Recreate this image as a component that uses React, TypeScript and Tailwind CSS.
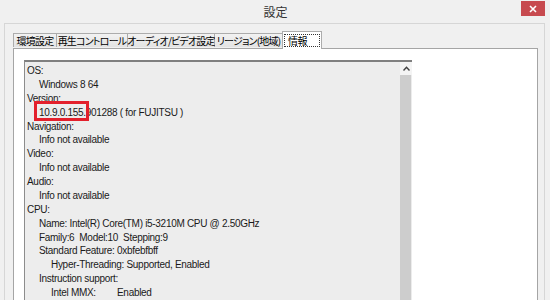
import React from "react";

const lines: [number, string][] = [
  [0, "OS:"],
  [1, "Windows 8 64"],
  [0, "Version:"],
  [1, "__VERSION__"],
  [0, "Navigation:"],
  [1, "Info not available"],
  [0, "Video:"],
  [1, "Info not available"],
  [0, "Audio:"],
  [1, "Info not available"],
  [0, "CPU:"],
  [1, "Name: Intel(R) Core(TM) i5-3210M CPU @ 2.50GHz"],
  [1, "Family:6  Model:10  Stepping:9"],
  [1, "Standard Feature: 0xbfebfbff"],
  [2, "Hyper-Threading: Supported, Enabled"],
  [1, "Instruction support:"],
  [2, "__MMX__"],
];

const tabs = [
  { label: "環境設定", w: "w-[44px]" },
  { label: "再生コントロール", w: "w-[71px]" },
  { label: "オーディオ/ビデオ設定", w: "w-[87px]" },
  { label: "リージョン(地域)", w: "w-[68px]" },
];

function Line({ level, text }: { level: number; text: string }) {
  const pad = level === 0 ? "pl-0" : level === 1 ? "pl-[12px]" : "pl-[24px]";
  if (text === "__VERSION__") {
    return (
      <div className={`relative whitespace-pre ${pad}`}>
        10.9.0.155.901288 ( for FUJITSU )
        <div className="absolute left-[7px] top-[-5px] w-[55px] h-[20px] border-[3px] border-[#e3202c]" />
      </div>
    );
  }
  if (text === "__MMX__") {
    return (
      <div className={`flex whitespace-pre ${pad}`}>
        <span className="w-[66px]">Intel MMX:</span>
        <span>Enabled</span>
      </div>
    );
  }
  return <div className={`whitespace-pre ${pad}`}>{text}</div>;
}

export default function App() {
  return (
    <div className="w-[550px] h-[300px] overflow-hidden bg-[#f0f0f0] relative">
      {/* title bar */}
      <div className="relative h-[23px] flex items-start justify-center">
        <div
          className="mt-[4px] ml-[1px] text-[12px] leading-[16px] text-[#333333]"
          style={{ fontFamily: '"Noto Sans CJK JP", sans-serif' }}
        >
          設定
        </div>
        <div className="absolute left-[521px] top-[1px] w-[24px] h-[15px] bg-[#c74a4f] flex items-center justify-center">
          <svg width="8" height="8" viewBox="0 0 8 8">
            <path d="M1 1L7 7M7 1L1 7" stroke="#ffffff" strokeWidth="1.6" />
          </svg>
        </div>
      </div>

      {/* group frame */}
      <div className="ml-[4px] w-[541px] h-[290px] border border-[#d6d6d6] pl-[8px] pr-[6px] pt-[6px]">
        {/* tabs */}
        <div
          className="flex items-end h-[18px] text-[10px] text-black [font-feature-settings:'palt']"
          style={{ fontFamily: '"Noto Sans CJK JP", sans-serif' }}
        >
          {tabs.map((t, i) => (
            <div
              key={i}
              className={`${t.w} h-[14px] mb-[1px] border border-b-0 border-[#acacac] ${i > 0 ? "border-l-0" : ""} bg-gradient-to-b from-[#f2f2f2] to-[#e3e3e3] flex items-center justify-center leading-[12px] whitespace-nowrap tracking-[-0.8px]`}
            >
              {t.label}
            </div>
          ))}
          <div className="relative z-10 w-[40px] h-[18px] -mb-[1px] -ml-[1px] border border-b-0 border-[#acacac] bg-white flex items-start justify-center pt-[2px]">
            <div className="w-[36px] h-[13px] border border-dotted border-[#333] flex items-center pl-[3px] leading-[12px] tracking-[-0.5px]">
              情報
            </div>
          </div>
        </div>

        {/* white panel */}
        <div className="w-[525px] h-[260px] bg-white border border-[#a5a5a5] pl-[10px] pt-[11px]">
          {/* info box */}
          <div className="flex w-[388px] h-[260px] border-t-2 border-l border-[#8c8c8c] border-t-[#7f7f7f] bg-[#ededed]">
            <div
              className="flex-1 pl-[2px] pt-[2px] text-[10px] tracking-[-0.3px] leading-[13.875px] text-[#1a1a1a]"
              style={{ fontFamily: '"Liberation Sans", Arial, sans-serif' }}
            >
              {lines.map(([lv, tx], i) => (
                <Line key={i} level={lv} text={tx} />
              ))}
            </div>
            <div className="w-[12px] flex flex-col">
              <div className="h-[13px] bg-[#f4f4f4] flex items-center justify-center">
                <svg width="7" height="5" viewBox="0 0 7 5">
                  <path d="M0.5 4.5L3.5 1.2L6.5 4.5" fill="none" stroke="#404040" strokeWidth="1.4" />
                </svg>
              </div>
              <div className="flex-1 flex">
                <div className="w-[11px] bg-[#cdcdcd]" />
                <div className="w-[1px] bg-[#ececec]" />
              </div>
            </div>
          </div>
        </div>
      </div>
    </div>
  );
}
